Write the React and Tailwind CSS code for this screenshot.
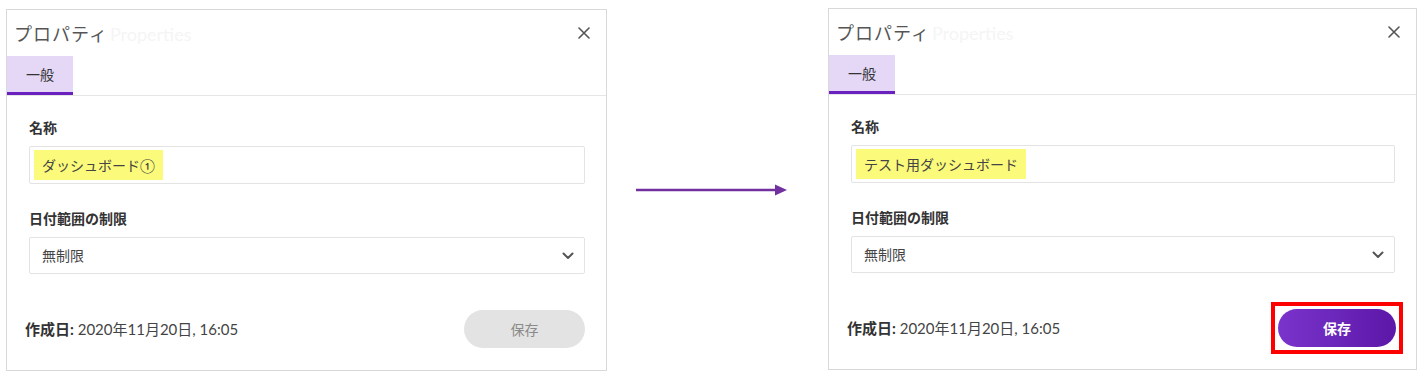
import React from "react";

const FONT = { fontFamily: '"Lato", "Noto Sans CJK JP", sans-serif' };

function CloseIcon() {
  return (
    <svg width="12" height="12" viewBox="0 0 12 12" className="block">
      <path d="M1 1 L11 11 M11 1 L1 11" stroke="#555" strokeWidth="1.6" strokeLinecap="round" />
    </svg>
  );
}

function Chevron() {
  return (
    <svg width="12" height="8" viewBox="0 0 12 8" className="block">
      <path d="M1.5 1.5 L6 6 L10.5 1.5" stroke="#555" strokeWidth="2" fill="none" strokeLinecap="round" strokeLinejoin="round" />
    </svg>
  );
}

function Panel({ name, active, width }) {
  return (
    <div
      className={`flex flex-col border border-[#d9d9d9] bg-white h-[362px] ${width}`}
      style={FONT}
    >
      {/* header */}
      <div className="flex flex-col border-b border-[#e6e6e6]">
        <div className="h-[46px] flex items-center justify-between pl-[7px] pr-[16px]">
          <div className="flex items-baseline pt-[2px]">
            <span className="text-[18px] text-[#555] tracking-[1px]">プロパティ</span>
            <span className="text-[18px] text-[#f5f5f5] ml-[2px]">Properties</span>
          </div>
          <CloseIcon />
        </div>
        <div className="flex">
          <div className="w-[66px] h-[39px] bg-[#e4d8f6] border-b-[3px] border-[#6b21c0] flex items-center justify-center text-[14px] text-[#333]">
            一般
          </div>
        </div>
      </div>
      {/* body */}
      <div className="flex-1 flex flex-col pl-[22px] pr-[21px]">
        <div className="mt-[23px] text-[14px] font-bold text-[#333] leading-[18px]">名称</div>
        <div className="mt-[9px] h-[38px] border border-[#e3e3e3] rounded-[2px] flex items-center pl-[4px]">
          <span className="bg-[#fbfa7a] h-[30px] flex items-center px-[8px] text-[14px] text-[#444]">
            {name}
          </span>
        </div>
        <div className="mt-[26px] text-[14px] font-bold text-[#333] leading-[18px]">日付範囲の制限</div>
        <div className="mt-[9px] h-[37px] border border-[#e3e3e3] rounded-[2px] flex items-center justify-between pl-[12px] pr-[10px]">
          <span className="text-[14px] text-[#444]">無制限</span>
          <Chevron />
        </div>
        <div className="mt-[36px] h-[38px] flex items-center justify-between">
          <div className="text-[15px] text-[#444] -ml-[4px]">
            <span className="font-bold text-[#333]">作成日:</span> 2020年11月20日, 16:05
          </div>
          {active ? (
            <div className="border-4 border-[#ff0000] p-[3px] -mr-[8px]">
              <div className="w-[118px] h-[38px] rounded-full bg-gradient-to-r from-[#7a33cc] to-[#5c17a8] flex items-center justify-center text-[14px] font-bold text-white">
                保存
              </div>
            </div>
          ) : (
            <div className="w-[121px] h-[38px] rounded-full bg-[#e3e3e3] flex items-center justify-center text-[14px] text-[#8a8a8a]">
              保存
            </div>
          )}
        </div>
      </div>
    </div>
  );
}

export default function App() {
  return (
    <div className="w-[1422px] h-[380px] bg-white flex">
      <div className="ml-[6px] mt-[9px]">
        <Panel name="ダッシュボード①" active={false} width="w-[601px]" />
      </div>
      <div className="w-[221px] flex items-center pl-[29px]">
        <svg width="152" height="14" viewBox="0 0 152 14" className="block">
          <line x1="0" y1="7" x2="140" y2="7" stroke="#7030a0" strokeWidth="2.5" />
          <path d="M139 1.5 L151 7 L139 12.5 Z" fill="#7030a0" />
        </svg>
      </div>
      <div className="mt-[8px]">
        <Panel name="テスト用ダッシュボード" active={true} width="w-[589px]" />
      </div>
    </div>
  );
}
